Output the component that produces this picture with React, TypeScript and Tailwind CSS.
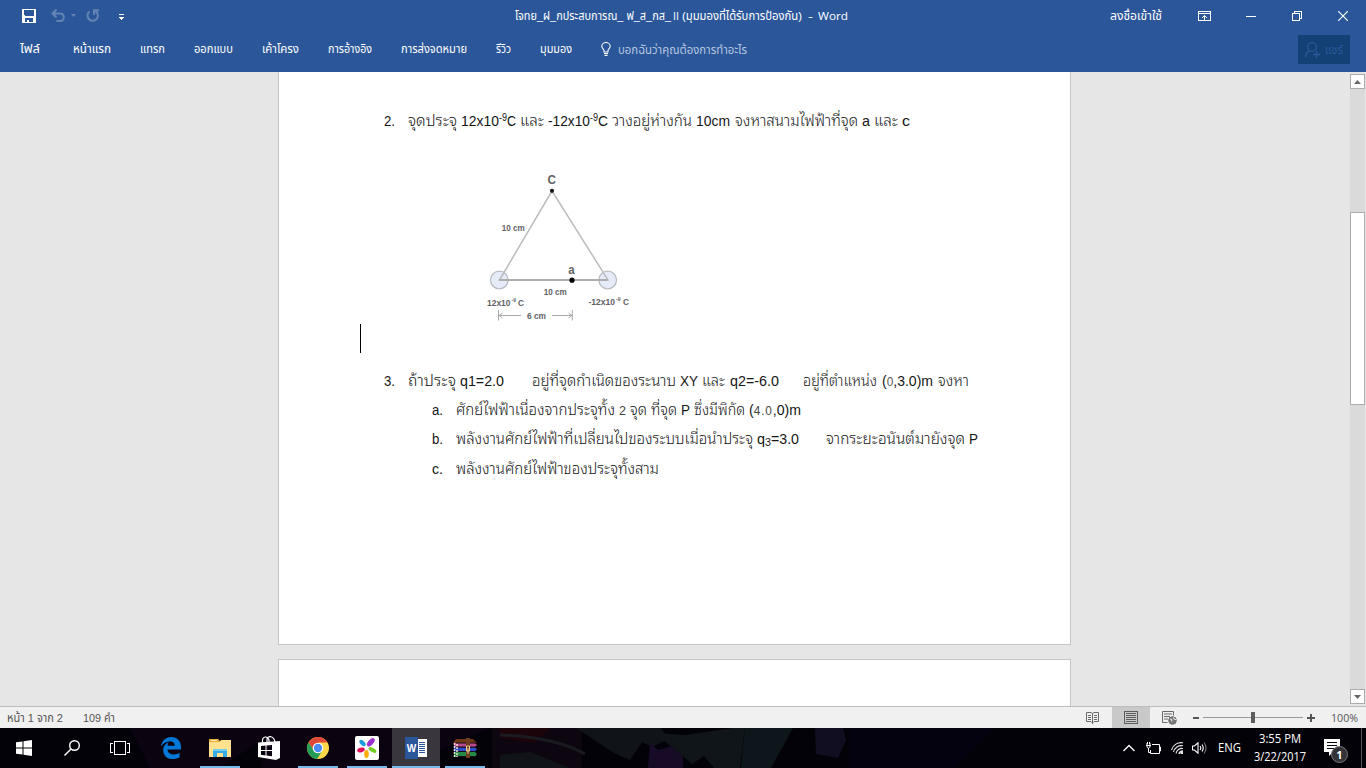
import React, { useLayoutEffect, useRef } from "react";
import type { ReactNode } from "react";

/* Text run that is condensed or widened to fill the width given by its class. */
function Fit({ className, children }: { className: string; children: ReactNode }) {
  const box = useRef<HTMLSpanElement>(null);
  const inner = useRef<HTMLSpanElement>(null);
  useLayoutEffect(() => {
    const b = box.current;
    const i = inner.current;
    if (b && i && i.offsetWidth > 0) {
      i.style.transform = `scaleX(${b.getBoundingClientRect().width / i.getBoundingClientRect().width})`;
    }
  }, []);
  return (
    <span ref={box} className={"block shrink-0 whitespace-nowrap " + className}>
      <span ref={inner} className="inline-block origin-left whitespace-nowrap">
        {children}
      </span>
    </span>
  );
}

function TitleBar() {
  return (
    <div className="flex h-[31px] shrink-0 items-center">
      <svg className="ml-[22px] h-[14px] w-[14px]" viewBox="0 0 14 14" shapeRendering="crispEdges">
        <path fill="#fff" fillRule="evenodd" d="M0 0h14v14H0zM2 1v5l1 1h8l1-1V1zM3 9v4h2v-2h2v2h4V9z" />
      </svg>
      <svg className="ml-[15px] h-[14px] w-[14px]" viewBox="0 0 14 14" fill="none" stroke="#6484b6" strokeWidth="2">
        <path d="M5.5 0.5L1.5 4.5L5.5 8.5M1.5 4.5H9C14 4.5 14 12 9 12H5.5" />
      </svg>
      <svg className="ml-[6px] h-[3px] w-[5px]" viewBox="0 0 5 3"><path fill="#6484b6" d="M0 0h5L2.5 3z" /></svg>
      <svg className="ml-[10px] h-[14px] w-[14px]" viewBox="0 0 14 14" fill="none" stroke="#6484b6" strokeWidth="2">
        <path d="M3.5 2.5A5.2 5.2 0 1 0 9.5 2.2M8 6V1.2H13" />
      </svg>
      <svg className="ml-[19px] mt-[3px] h-[6px] w-[5px]" viewBox="0 0 5 6" shapeRendering="crispEdges">
        <path fill="#fff" d="M0 0h5v1H0zM0 3h5v1H4v1H3v1H2V5H1V4H0z" />
      </svg>
      <div className="ml-[391px] flex text-[11.5px] leading-[20px] text-white">
        <Fit className="w-[156px]">โจทย_ฝ_กประสบการณ_ ฟ_ส_กส_</Fit>
        <Fit className="ml-[2px] w-[6px] font-['Open_Sans','Noto_Sans',sans-serif]">II</Fit>
        <Fit className="ml-[3px] w-[120px]">(มุมมองที่ได้รับการป้องกัน)</Fit>
        <Fit className="ml-[6px] w-[5px]">-</Fit>
        <Fit className="ml-[5px] w-[30px] font-['Open_Sans','Noto_Sans',sans-serif]">Word</Fit>
      </div>
      <Fit className="ml-[262px] w-[52px] text-[11.5px] leading-[20px] text-white">ลงชื่อเข้าใช้</Fit>
      <svg className="ml-[36px] h-[10px] w-[13px]" viewBox="0 0 13 10" shapeRendering="crispEdges" fill="none" stroke="#fff">
        <path d="M.5 .5h12v9H.5zM1 2.5h11M6.5 4v5M5 5.5h3M4 6.5h1M8 6.5h1" />
      </svg>
      <svg className="ml-[35px] h-[10px] w-[10px]" viewBox="0 0 10 10" shapeRendering="crispEdges"><path fill="#fff" d="M0 5h10v1H0z" /></svg>
      <svg className="ml-[36px] h-[10px] w-[10px]" viewBox="0 0 10 10" shapeRendering="crispEdges" fill="none" stroke="#fff">
        <path d="M.5 2.5h7v7h-7zM2.5 2V.5h7v7H8" />
      </svg>
      <svg className="ml-[36px] h-[10px] w-[10px]" viewBox="0 0 10 10" fill="none" stroke="#fff" strokeWidth="1.1">
        <path d="M0 0L10 10M10 0L0 10" />
      </svg>
    </div>
  );
}

function RibbonTabs() {
  return (
    <div className="flex h-[41px] shrink-0 items-start pt-[8px] text-[11.5px] leading-[20px] text-white">
      <Fit className="ml-[20px] w-[20px]">ไฟล์</Fit>
      <Fit className="ml-[33px] w-[38px]">หน้าแรก</Fit>
      <Fit className="ml-[29px] w-[25px]">แทรก</Fit>
      <Fit className="ml-[29px] w-[39px]">ออกแบบ</Fit>
      <Fit className="ml-[29px] w-[37px]">เค้าโครง</Fit>
      <Fit className="ml-[29px] w-[44px]">การอ้างอิง</Fit>
      <Fit className="ml-[29px] w-[66px]">การส่งจดหมาย</Fit>
      <Fit className="ml-[29px] w-[15px]">รีวิว</Fit>
      <Fit className="ml-[29px] w-[32px]">มุมมอง</Fit>
      <svg className="ml-[29px] mt-[3px] h-[14px] w-[10px]" viewBox="0 0 10 14" fill="none" stroke="#fff" strokeWidth="1.1">
        <path d="M3 10V8.5C3 7.5 .8 6.5 .8 4.3a4.2 3.8 0 0 1 8.4 0C9.2 6.5 7 7.5 7 8.5V10zM3 11.5h4M3.5 13.4h3" />
      </svg>
      <Fit className="ml-[7px] mt-px w-[129px] text-[#b5c5df]">บอกฉันว่าคุณต้องการทำอะไร</Fit>
      <div className="ml-auto mr-[16px] -mt-[4px] flex h-[29px] w-[52px] items-center bg-[#134075] text-[#2b5998]">
        <svg className="ml-[7px] h-[16px] w-[15px]" viewBox="0 0 15 16" fill="none" stroke="#2b5998" strokeWidth="1.3">
          <circle cx="7" cy="5" r="4.4" />
          <path d="M.6 15.5C.6 12 2.5 9.5 5 9M8 12.5h7M11.5 9v7" />
        </svg>
        <Fit className="ml-[5px] w-[18px]">แชร์</Fit>
      </div>
    </div>
  );
}

function Diagram() {
  return (
    <svg
      className="ml-[191px] mt-[30px] block h-[170px] w-[180px] shrink-0"
      viewBox="470 165 180 170"
      fontFamily="Liberation Sans, Arial, sans-serif"
      fontWeight="bold"
      fill="#626266"
    >
      <g fill="#e5ecf7" stroke="#b8bdc5" strokeWidth="1.3">
        <circle cx="499.3" cy="280" r="8.8" />
        <circle cx="607.7" cy="280" r="8.8" />
      </g>
      <path d="M499.5 280L552 191L608 280z" fill="none" stroke="#bcbcbc" strokeWidth="1.5" />
      <path d="M499.5 280h108" stroke="#a4a4a4" strokeWidth="1.4" />
      <circle cx="552" cy="190.8" r="2.1" fill="#111" />
      <circle cx="572" cy="280.2" r="2.6" fill="#050505" />
      <text x="547.5" y="184" fontSize="12" textLength="8.5" lengthAdjust="spacingAndGlyphs">C</text>
      <text x="568.3" y="274" fontSize="12" textLength="6.4" lengthAdjust="spacingAndGlyphs">a</text>
      <g fontSize="8.5">
        <text x="501.8" y="230.5" textLength="23" lengthAdjust="spacingAndGlyphs">10 cm</text>
        <text x="543.8" y="295" textLength="23" lengthAdjust="spacingAndGlyphs">10 cm</text>
        <text x="487" y="305.5" textLength="23.5" lengthAdjust="spacingAndGlyphs">12x10</text>
        <text x="511.5" y="301.5" fontSize="5">-9</text>
        <text x="518" y="305.5" textLength="6" lengthAdjust="spacingAndGlyphs">C</text>
        <text x="588.5" y="304.5" textLength="26.5" lengthAdjust="spacingAndGlyphs">-12x10</text>
        <text x="616" y="300.5" fontSize="5">-9</text>
        <text x="623" y="304.5" textLength="6" lengthAdjust="spacingAndGlyphs">C</text>
        <text x="527" y="319" textLength="19" lengthAdjust="spacingAndGlyphs">6 cm</text>
      </g>
      <path
        d="M498.5 310v10.5M572.3 310v10.5M499 315.5h22M552 315.5h20M502.5 313l-3.5 2.5l3.5 2.5M568.5 313l3.5 2.5l-3.5 2.5"
        fill="none" stroke="#a9a9a9" strokeWidth="1"
      />
    </svg>
  );
}

function DocumentBody() {
  return (
    <div className="flex h-[573px] w-[793px] shrink-0 flex-col border border-t-0 border-[#c6c6c6] bg-white font-['Liberation_Sans','Noto_Sans_Thai_Looped','Noto_Looped_Thai','Loma','Garuda','Noto_Serif_Thai','Noto_Sans_Thai',sans-serif] text-[15.5px] font-light text-[#161616]">
      <div className="mt-[34px] flex h-[29px] shrink-0 items-center leading-[29px]">
        <Fit className="ml-[105px] w-[11px]">2.</Fit>
        <Fit className="ml-[13px] w-[49px]">จุดประจุ</Fit>
        <Fit className="ml-[4px] w-[38px]">12x10</Fit>
        <Fit className="-mt-[6px] w-[8px] text-[10.5px]">-9</Fit>
        <Fit className="w-[9px]">C</Fit>
        <Fit className="ml-[4px] w-[24px]">และ</Fit>
        <Fit className="ml-[4px] w-[42px]">-12x10</Fit>
        <Fit className="-mt-[6px] w-[8px] text-[10.5px]">-9</Fit>
        <Fit className="w-[10px]">C</Fit>
        <Fit className="ml-[4px] w-[80px]">วางอยู่ห่างกัน</Fit>
        <Fit className="ml-[4px] w-[34px]">10cm</Fit>
        <Fit className="ml-[5px] w-[123px]">จงหาสนามไฟฟ้าที่จุด</Fit>
        <Fit className="ml-[4px] w-[8px]">a</Fit>
        <Fit className="ml-[4px] w-[24px]">และ</Fit>
        <Fit className="ml-[4px] w-[8px]">c</Fit>
      </div>
      <Diagram />
      <div className="-mt-[11px] ml-[81px] h-[29px] w-px shrink-0 bg-black" />
      <div className="mt-[13px] flex h-[29px] shrink-0 items-center leading-[29px]">
        <Fit className="ml-[105px] w-[11px]">3.</Fit>
        <Fit className="ml-[13px] w-[48px]">ถ้าประจุ</Fit>
        <Fit className="ml-[4px] w-[44px]">q1=2.0</Fit>
        <Fit className="ml-[28px] w-[144px]">อยู่ที่จุดกำเนิดของระนาบ</Fit>
        <Fit className="ml-[4px] w-[18px]">XY</Fit>
        <Fit className="ml-[4px] w-[23px]">และ</Fit>
        <Fit className="ml-[5px] w-[49px]">q2=-6.0</Fit>
        <Fit className="ml-[24px] w-[74px]">อยู่ที่ตำแหน่ง</Fit>
        <Fit className="ml-[5px] w-[51px]">(<span className="text-[13px] text-[#555]">0</span>,3.0)m</Fit>
        <Fit className="ml-[5px] w-[31px]">จงหา</Fit>
      </div>
      <div className="flex h-[29px] shrink-0 items-center leading-[29px]">
        <Fit className="ml-[153px] w-[11px]">a.</Fit>
        <Fit className="ml-[13px] w-[159px]">ศักย์ไฟฟ้าเนื่องจากประจุทั้ง</Fit>
        <Fit className="ml-[4px] mt-px w-[7px] text-[13px] text-[#444]">2</Fit>
        <Fit className="ml-[4px] w-[17px]">จุด</Fit>
        <Fit className="ml-[4px] w-[26px]">ที่จุด</Fit>
        <Fit className="ml-[4px] w-[9px]">P</Fit>
        <Fit className="ml-[4px] w-[51px]">ซึ่งมีพิกัด</Fit>
        <Fit className="ml-[4px] w-[52px]">(<span className="text-[13px] tracking-[1px] text-[#444]">4.0</span>,0)m</Fit>
      </div>
      <div className="flex h-[29px] shrink-0 items-center leading-[29px]">
        <Fit className="ml-[153px] w-[11px]">b.</Fit>
        <Fit className="ml-[13px] w-[297px]">พลังงานศักย์ไฟฟ้าที่เปลี่ยนไปของระบบเมื่อนำประจุ</Fit>
        <Fit className="ml-[4px] w-[8px]">q</Fit>
        <Fit className="mt-[8px] w-[6px] text-[10.5px]">3</Fit>
        <Fit className="w-[28px]">=3.0</Fit>
        <Fit className="ml-[27px] w-[139px]">จากระยะอนันต์มายังจุด</Fit>
        <Fit className="ml-[4px] w-[9px]">P</Fit>
      </div>
      <div className="mt-px flex h-[29px] shrink-0 items-center leading-[29px]">
        <Fit className="ml-[153px] w-[11px]">c.</Fit>
        <Fit className="ml-[13px] w-[203px]">พลังงานศักย์ไฟฟ้าของประจุทั้งสาม</Fit>
      </div>
    </div>
  );
}

function ScrollBar() {
  return (
    <div className="flex w-[16px] shrink-0 flex-col items-start pb-[2px] pt-[2px]">
      <div className="flex h-[15px] w-[15px] items-center justify-center border border-[#ababab] bg-white">
        <svg className="h-[4px] w-[7px]" viewBox="0 0 7 4"><path fill="#666" d="M0 4h7L3.5 0z" /></svg>
      </div>
      <div className="w-[15px] flex-1 bg-[#dadada] pt-[123px]">
        <div className="h-[193px] w-[15px] border border-[#ababab] bg-white" />
      </div>
      <div className="flex h-[15px] w-[15px] items-center justify-center border border-[#ababab] bg-white">
        <svg className="h-[4px] w-[7px]" viewBox="0 0 7 4"><path fill="#666" d="M0 0h7L3.5 4z" /></svg>
      </div>
    </div>
  );
}

function StatusBar() {
  return (
    <div className="flex h-[22px] shrink-0 items-center border-t border-[#bdbdbd] bg-[#f0f0f0] text-[11.5px] leading-[20px] text-[#555]">
      <Fit className="ml-[7px] w-[56px]">หน้า 1 จาก 2</Fit>
      <Fit className="ml-[20px] w-[32px]">109 คำ</Fit>
      <svg className="ml-auto h-[13px] w-[13px]" viewBox="0 0 13 13" fill="none" stroke="#6a6a6a">
        <path d="M6.5 2v11M.5 1.5h4.500L6.500 2.500L8 1.500H12.500V10.500H8L6.500 12L5 10.500H.5zM2 4.500h3M2 6.500h3M2 8.500h3M8 4.500h3M8 6.500h3M8 8.500h3" />
      </svg>
      <div className="ml-[13px] flex h-[21px] w-[38px] items-center justify-center bg-[#c9c9c9]">
        <svg className="h-[13px] w-[14px]" viewBox="0 0 14 13" fill="none" stroke="#5c5c5c" shapeRendering="crispEdges">
          <path d="M.5 .5h13v12H.5zM2 2.500h10M2 4.500h10M2 6.500h10M2 8.500h10M2 10.500h10" />
        </svg>
      </div>
      <svg className="ml-[12px] h-[14px] w-[15px]" viewBox="0 0 15 14" fill="none" stroke="#6a6a6a">
        <path d="M5.500 11.500H.5V.5h11v4M2 3h8M2 5.500h6M2 8h4" />
        <circle cx="10.500" cy="9.500" r="3.800" fill="#777" stroke="#6a6a6a" />
        <path stroke="#f0f0f0" d="M8 8l2 .5l-.5 2M11.500 6.500l.5 1.500l2 .5" />
      </svg>
      <div className="ml-[16px] h-[2px] w-[6px] bg-[#555]" />
      <div className="ml-[4px] flex h-[11px] w-[100px] items-center">
        <div className="h-px w-[48px] bg-[#999]" />
        <div className="h-[11px] w-[4px] bg-[#5c5c5c]" />
        <div className="h-px flex-1 bg-[#999]" />
      </div>
      <svg className="ml-[4px] h-[8px] w-[8px]" viewBox="0 0 8 8"><path fill="#555" d="M3 0h2v3h3v2H5v3H3V5H0V3h3z" /></svg>
      <Fit className="ml-[16px] mr-[8px] w-[27px] font-['Open_Sans','Noto_Sans',sans-serif]">100%</Fit>
    </div>
  );
}

function TaskItem({ open, active, children }: { open?: boolean; active?: boolean; children: ReactNode }) {
  return (
    <div className={"mr-px flex h-[40px] w-[48px] shrink-0 flex-col items-center " + (active ? "bg-[#3a363d]" : "")}>
      <div className="flex h-[38px] items-center justify-center pt-[2px]">{children}</div>
      {open && <div className={"h-[2px] bg-[#76b9ed] " + (active ? "w-full" : "w-[40px]")} />}
    </div>
  );
}

function TaskbarArt() {
  return (
    <svg className="absolute inset-0 h-[40px] w-[1366px]" viewBox="0 0 1366 40">
      <rect width="1366" height="40" fill="#030208" />
      <path fill="#0c0310" d="M130 0h150l-60 40H150zM270 0h220l-90 40H260z" />
      <path fill="#0d0611" d="M492 0h90v40h-90z" />
      <path fill="#1c040b" d="M500 0h50l-15 15L500 10z" />
      <path fill="none" stroke="#191b20" strokeWidth="3" d="M500 7C540 8 570 17 585 26" />
      <path fill="#101418" d="M500 27l30-3l40 16h-70zM576 0h85l8 11l-17 8l-10-5l-12 18l-16-7z" />
      <path fill="#180b28" d="M650 15l8 7l25-7v25h-35z" />
      <path fill="#101519" d="M655 5l30 2l48-7h12l-5 40h-26l-10-12l-12 8z" />
      <path fill="#0d171b" d="M745 0h48l-22 40h-30z" />
      <path fill="#120e21" d="M815 0h28l3 12l-8 18l-22-4z" />
      <path fill="#05020f" d="M850 0h145l-40 40H850z" />
    </svg>
  );
}

function TaskBar() {
  return (
    <div className="relative h-[40px] shrink-0 bg-[#030208]">
      <TaskbarArt />
      <div className="relative flex h-[40px] items-center text-white">
        <div className="flex w-[48px] justify-center">
          <svg className="h-[16px] w-[16px]" viewBox="0 0 16 16" fill="#fff"><path d="M0 2.300L6.500 1.400V7.500H0zM7.500 1.200L16 0V7.500H7.500zM0 8.500h6.500v6.100L0 13.700zM7.500 8.500H16V16L7.500 14.800z" /></svg>
        </div>
        <div className="flex w-[48px] justify-center">
          <svg className="h-[16px] w-[16px]" viewBox="0 0 16 16" fill="none" stroke="#fff" strokeWidth="1.400"><circle cx="10.500" cy="5.500" r="4.800" /><path d="M7 9L.5 15.500" /></svg>
        </div>
        <div className="flex w-[48px] justify-center">
          <svg className="h-[14px] w-[20px]" viewBox="0 0 20 14" fill="none" stroke="#fff" shapeRendering="crispEdges"><path d="M4.500 .5h11v13h-11zM3 2.500H.5v9H3M17 2.500h2.500v9H17" /></svg>
        </div>
        <div className="w-[3px]" />
        <TaskItem>
          <svg className="h-[22px] w-[20px]" viewBox="0 0 20 22"><path fill="#0078d7" d="M0 9.500C1 3.500 5 0 10.200 0C16.500 0 20 4.500 20 10V12.500H6.500C6.700 15.800 9.500 17.500 12.800 17.500C15 17.500 17 16.800 18.600 15.800V20.200C16.700 21.400 14.500 22 11.800 22C6 22 2.200 18.500 2.200 13.200C2.200 9.500 4.200 6.600 7.800 5.100C7 6.200 6.600 7.300 6.500 8.700H13.700C13.700 5.800 12 4.200 9 4.200C5 4.200 2 6.500 0 9.500z" /></svg>
        </TaskItem>
        <TaskItem open>
          <svg className="h-[18px] w-[22px]" viewBox="0 0 22 18"><path fill="#e8ac38" d="M0 0h9l2 2h10v3H0z" /><path fill="#ffe18f" d="M0 3h11l1-2h10v17H0z" /><path fill="#fff2c0" d="M2 1h6v1H2z" /><path fill="#32ace2" d="M4 10h14v8h-4v-4H8v4H4z" /><path fill="#72cff2" d="M4 10h14v2H4z" /></svg>
        </TaskItem>
        <TaskItem>
          <svg className="h-[24px] w-[22px]" viewBox="0 0 22 24"><path fill="#fff" fillRule="evenodd" d="M0 6.500L22 5V22L18 24L0 21zM3 10v4h4.500V9.500zM8.500 9.400V14H14V9zM3 15v3.800l4.500 .6V15zM8.500 15v4.500l5.500 .7V15z" /><path fill="none" stroke="#fff" strokeWidth="1.200" d="M4.500 7V4C5 0 10 0 11 4V7M9 6V3C10 -1 16 0 17 6" /></svg>
        </TaskItem>
        <TaskItem open>
          <svg className="h-[22px] w-[22px]" viewBox="0 0 22 22"><circle cx="11" cy="11" r="11" fill="#ffd54a" /><path fill="#df4738" d="M1.500 5.500A11 11 0 0 1 20.500 5.500H11L7 13.500z" /><path fill="#249c58" d="M1.500 5.500A11 11 0 0 0 10 22L15.500 13.500L7 13.500z" /><circle cx="11" cy="11" r="5.300" fill="#fff" /><circle cx="11" cy="11" r="4.200" fill="#4b8bf2" /></svg>
        </TaskItem>
        <TaskItem open>
          <svg className="h-[24px] w-[24px]" viewBox="0 0 24 24"><rect width="24" height="24" rx="2" fill="#fff" /><ellipse cx="15.800" cy="6.300" rx="2.600" ry="5" transform="rotate(42 15.800 6.300)" fill="#9b32cf" /><ellipse cx="7.500" cy="7" rx="2.200" ry="3.800" transform="rotate(-45 7.500 7)" fill="#1c9be0" /><ellipse cx="6" cy="14" rx="3.900" ry="2.200" transform="rotate(-15 6 14)" fill="#e30b57" /><ellipse cx="11.500" cy="18" rx="2.300" ry="4" fill="#ffad00" /><ellipse cx="17.500" cy="14" rx="4.300" ry="2.100" transform="rotate(30 17.500 14)" fill="#75cc22" /></svg>
        </TaskItem>
        <TaskItem open active>
          <div className="flex h-[22px] w-[22px] items-center">
            <div className="z-10 flex h-[22px] w-[13px] shrink-0 items-center justify-center bg-[#2b579a] font-['Liberation_Sans',sans-serif] text-[10px] font-bold">W</div>
            <svg className="h-[18px] w-[9px]" viewBox="0 0 9 18" shapeRendering="crispEdges"><path fill="#fff" d="M0 0h9v18H0z" /><path stroke="#2b579a" d="M1 3.500h6M1 5.500h6M1 7.500h6M1 9.500h6M1 11.500h6M1 13.500h6" /></svg>
          </div>
        </TaskItem>
        <TaskItem open>
          <svg className="h-[20px] w-[24px]" viewBox="0 0 24 20"><path fill="#713817" d="M3 1h17l4 4H0z" /><path fill="#b9498f" d="M1 5h21l2 2l-2 2H1z" /><path fill="#304dcc" d="M1 9.500h21l2 1.500l-2 2.500H1z" /><path fill="#258a46" d="M1 14h21l2 2l-2 3H1z" /><path fill="none" stroke="#1a1014" d="M3 5h20M3 9h20M3 13.500h20M3 18.500h20" /><path stroke="#eee4d8" strokeWidth="1.500" strokeDasharray="2 1" d="M1.500 5v14M4 6v13" /><path fill="#6d3d20" d="M13 0h4v20h-4z" /><path fill="none" stroke="#e8cb93" d="M13.500 8h3v5h-3zM15 10v6" /></svg>
        </TaskItem>
        <svg className="ml-[633px] h-[8px] w-[12px]" viewBox="0 0 12 8" fill="none" stroke="#fff" strokeWidth="1.300"><path d="M.5 7L6 1.500L11.500 7" /></svg>
        <svg className="ml-[10px] h-[12px] w-[16px]" viewBox="0 0 16 12" fill="none" stroke="#fff"><path d="M7 2.500h7.500v9h-9V8M14.500 5h1v4h-1M1 3.500h5M2 1v3c0 3 3 3 3 0V1M3.500 6v4.500H5M2.500 0v2M4.500 0v2" /></svg>
        <svg className="ml-[10px] h-[12px] w-[12px]" viewBox="0 0 12 12" fill="none" stroke="#e8e8e8" strokeWidth="1.100"><path d="M.5 8A10 10 0 0 1 12 .8M2.500 10A8 8 0 0 1 12 3.800M5 11.500A6 6 0 0 1 12 6.500" /><path d="M8 12a4 4 0 0 1 4-3" strokeWidth="1.500" /><circle cx="11" cy="11" r="1" fill="#fff" /></svg>
        <svg className="ml-[9px] h-[12px] w-[15px]" viewBox="0 0 15 12" fill="none" stroke="#fff" strokeWidth="1.100"><path d="M.5 4h2L6 .8v10.400L2.500 8h-2zM8 4Q9.500 6 8 8M10 2.500Q12.500 6 10 9.500" /><path stroke="#777" d="M12 .5Q16 6 12 11.500" /></svg>
        <Fit className="ml-[11px] w-[23px] font-['Open_Sans','Noto_Sans',sans-serif] text-[12px] leading-[18px]">ENG</Fit>
        <div className="ml-[12px] flex w-[54px] flex-col items-center font-['Open_Sans','Noto_Sans',sans-serif] text-[12px] leading-[18px]">
          <Fit className="w-[42px]">3:55 PM</Fit>
          <Fit className="w-[52px]">3/22/2017</Fit>
        </div>
        <svg className="ml-[17px] mt-[4px] h-[26px] w-[25px]" viewBox="0 0 25 26"><path fill="#fff" d="M0 2h16v13H9l-4 4v-4H0z" /><path stroke="#08050c" d="M3 5.500h10M3 8.500h10M3 11.500h7" /><circle cx="15.500" cy="17.500" r="8" fill="#333237" stroke="#77777a" /><text x="15.500" y="21.700" textAnchor="middle" fontFamily="Open Sans, sans-serif" fontSize="11" fontWeight="bold" fill="#fff">1</text></svg>
        <div className="ml-auto mr-[4px] h-[40px] w-px bg-[#55555a]" />
      </div>
    </div>
  );
}

export default function App() {
  return (
    <div className="flex h-[768px] w-[1366px] flex-col overflow-hidden bg-[#e6e6e6] font-['Liberation_Sans','Noto_Sans_Thai','Noto_Sans',sans-serif]">
      <header className="flex h-[72px] shrink-0 flex-col bg-[#2b579a]">
        <TitleBar />
        <RibbonTabs />
      </header>
      <main className="flex h-[634px] shrink-0">
        <div className="flex flex-1 flex-col overflow-hidden pl-[278px]">
          <DocumentBody />
          <div className="mt-[14px] h-[60px] w-[793px] shrink-0 border border-[#c6c6c6] bg-white" />
        </div>
        <ScrollBar />
      </main>
      <StatusBar />
      <TaskBar />
    </div>
  );
}
